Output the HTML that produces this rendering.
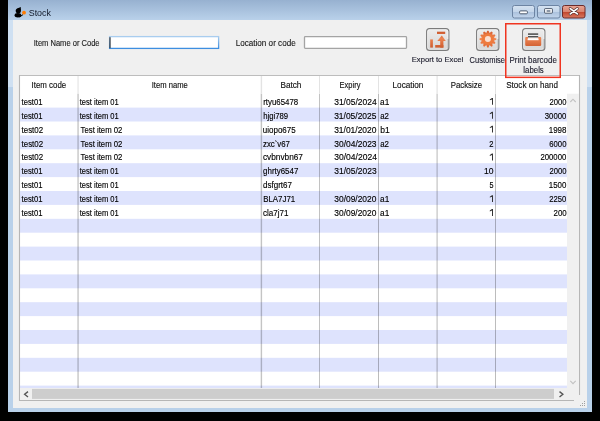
<!DOCTYPE html>
<html><head><meta charset="utf-8"><title>Stock</title>
<style>
html,body{margin:0;padding:0;width:600px;height:421px;overflow:hidden;background:#000;}
svg{display:block;font-family:"Liberation Sans", sans-serif;}
</style></head><body>
<svg width="600" height="421" viewBox="0 0 600 421">
<rect x="0" y="0" width="600" height="421" fill="#000"/>
<rect x="8" y="0" width="584" height="412" fill="#b9d1ea"/>
<rect x="8" y="20" width="5" height="67" fill="#cfe0f2"/>
<rect x="587" y="20" width="5" height="67" fill="#cfe0f2"/>
<defs><linearGradient id="tg" x1="0" y1="0" x2="0" y2="1"><stop offset="0" stop-color="#97b1d0"/><stop offset="1" stop-color="#b9d1ea"/></linearGradient><linearGradient id="btn" x1="0" y1="0" x2="0" y2="1"><stop offset="0" stop-color="#d6e3f1"/><stop offset="0.5" stop-color="#c3d5ea"/><stop offset="0.5" stop-color="#a9c0dc"/><stop offset="1" stop-color="#c4d6ec"/></linearGradient><linearGradient id="cls" x1="0" y1="0" x2="0" y2="1"><stop offset="0" stop-color="#e9a595"/><stop offset="0.5" stop-color="#d98470"/><stop offset="0.5" stop-color="#c0432b"/><stop offset="1" stop-color="#d97a62"/></linearGradient><linearGradient id="ico" x1="0" y1="0" x2="0" y2="1"><stop offset="0" stop-color="#ededed"/><stop offset="1" stop-color="#d6d6d6"/></linearGradient><linearGradient id="inp" x1="0" y1="0" x2="0" y2="1"><stop offset="0" stop-color="#a9cdef"/><stop offset="1" stop-color="#3d8ee0"/></linearGradient></defs>
<rect x="8" y="0" width="584" height="20" fill="url(#tg)"/>
<rect x="13" y="20" width="574" height="388" fill="#f0f0f0"/>
<g fill="#000"><circle cx="18.3" cy="10.8" r="2.6"/><path d="M17.2 8.6 L20.8 6.9 L20.9 11 Z"/><ellipse cx="17.9" cy="15.3" rx="3.3" ry="2.2"/><path d="M19 16.5 L22.8 14.2 L23.2 15 L19.5 17.4 Z"/></g>
<circle cx="24" cy="12.7" r="1.9" fill="#ff7a00"/>
<text id="title" x="28.75" y="15.80" font-size="9.5" fill="#101828" textLength="22.16" lengthAdjust="spacingAndGlyphs">Stock</text>
<rect x="512.5" y="5.5" width="22" height="12.5" rx="2" fill="url(#btn)" stroke="#6d84a3" stroke-width="1"/>
<rect x="519.6" y="10.9" width="7.8" height="2.9" rx="1" fill="#fff" stroke="#3e4c60" stroke-width="0.9"/>
<rect x="537.5" y="5.5" width="22.5" height="12.5" rx="2" fill="url(#btn)" stroke="#6d84a3" stroke-width="1"/>
<rect x="544.6" y="8.6" width="7.8" height="4.6" rx="0.6" fill="#fff" stroke="#3e4c60" stroke-width="0.9"/>
<rect x="546.6" y="10.3" width="3.8" height="1.4" fill="#5a6a80"/>
<rect x="562.5" y="5.5" width="22.5" height="12.5" rx="2" fill="url(#cls)" stroke="#6b2b2b" stroke-width="1"/>
<path d="M570.3 8.6 L577.3 13.9 M577.3 8.6 L570.3 13.9" stroke="#4a2a2a" stroke-width="3.0" stroke-linecap="round"/>
<path d="M570.3 8.6 L577.3 13.9 M577.3 8.6 L570.3 13.9" stroke="#fff" stroke-width="1.8" stroke-linecap="round"/>
<text id="lbl1" x="33.71" y="45.60" font-size="8.2" fill="#1a1a1a" stroke="#1a1a1a" stroke-width="0.12" textLength="65.86" lengthAdjust="spacingAndGlyphs">Item Name or Code</text>
<rect x="109.6" y="36.6" width="109" height="11.8" fill="#fff" stroke="url(#inp)" stroke-width="1.3"/>
<rect x="109.4" y="37.2" width="1.2" height="11" fill="#3a3a3a"/>
<text id="lbl2" x="235.71" y="45.60" font-size="8.2" fill="#1a1a1a" stroke="#1a1a1a" stroke-width="0.12" textLength="59.98" lengthAdjust="spacingAndGlyphs">Location or code</text>
<rect x="304.5" y="36.6" width="102" height="11.8" rx="0.8" fill="#fff" stroke="#a4a4a4" stroke-width="1.3"/>
<rect x="426.6" y="28.6" width="22.3" height="21.8" rx="3" fill="url(#ico)" stroke="#7c7c7c" stroke-width="1.1"/>
<rect x="427.7" y="29.7" width="20.1" height="19.6" rx="2" fill="none" stroke="#fafafa" stroke-width="0.7" opacity="0.8"/>
<rect x="447.6" y="39" width="1.2" height="10.5" fill="#8c8c8c" opacity="0.7"/>
<defs><linearGradient id="og" gradientUnits="userSpaceOnUse" x1="0" y1="31" x2="0" y2="48"><stop offset="0" stop-color="#c9542a"/><stop offset="0.45" stop-color="#ec8452"/><stop offset="1" stop-color="#cc5a2c"/></linearGradient></defs>
<g fill="url(#og)"><rect x="437" y="31.7" width="8.2" height="2.3"/><rect x="430.2" y="39.4" width="2.7" height="8.2"/><rect x="435.2" y="45" width="8.2" height="2.6"/><rect x="440.2" y="40" width="3.2" height="7.6"/><path d="M437.3 40.9 L441.8 35.6 L445.8 40.9 Z"/></g>
<rect x="476.6" y="28.6" width="22.3" height="21.8" rx="3" fill="url(#ico)" stroke="#7c7c7c" stroke-width="1.1"/>
<rect x="477.7" y="29.7" width="20.1" height="19.6" rx="2" fill="none" stroke="#fafafa" stroke-width="0.7" opacity="0.8"/>
<rect x="497.6" y="39" width="1.2" height="10.5" fill="#8c8c8c" opacity="0.7"/>
<defs><linearGradient id="gear" x1="0" y1="0" x2="0" y2="1"><stop offset="0" stop-color="#d4592a"/><stop offset="0.45" stop-color="#f28852"/><stop offset="1" stop-color="#e06630"/></linearGradient></defs>
<polygon points="486.30,33.11 487.28,30.72 488.52,30.72 489.50,33.11 489.50,33.11 491.56,31.54 492.62,32.15 492.28,34.72 492.28,34.72 494.85,34.38 495.46,35.44 493.89,37.50 493.89,37.50 496.28,38.48 496.28,39.72 493.89,40.70 493.89,40.70 495.46,42.76 494.85,43.82 492.28,43.48 492.28,43.48 492.62,46.05 491.56,46.66 489.50,45.09 489.50,45.09 488.52,47.48 487.28,47.48 486.30,45.09 486.30,45.09 484.24,46.66 483.18,46.05 483.52,43.48 483.52,43.48 480.95,43.82 480.34,42.76 481.91,40.70 481.91,40.70 479.52,39.72 479.52,38.48 481.91,37.50 481.91,37.50 480.34,35.44 480.95,34.38 483.52,34.72 483.52,34.72 483.18,32.15 484.24,31.54 486.30,33.11" fill="url(#gear)"/>
<circle cx="487.9" cy="39.1" r="5.8" fill="#ee7b3e"/>
<circle cx="487.9" cy="39.1" r="3" fill="#fbe0d2"/>
<rect x="522.6" y="28.6" width="22.3" height="21.8" rx="3" fill="url(#ico)" stroke="#7c7c7c" stroke-width="1.1"/>
<rect x="523.7" y="29.7" width="20.1" height="19.6" rx="2" fill="none" stroke="#fafafa" stroke-width="0.7" opacity="0.8"/>
<rect x="543.6" y="39" width="1.2" height="10.5" fill="#8c8c8c" opacity="0.7"/>
<rect x="525.2" y="36.9" width="16" height="9" rx="1.2" fill="url(#og)"/>
<rect x="528" y="33.3" width="10.2" height="5.5" fill="#fff"/>
<rect x="528" y="33.3" width="10.2" height="1.6" fill="#505050"/>
<rect x="528" y="35.9" width="10.2" height="1.6" fill="#505050"/>
<rect x="527.6" y="38.6" width="11" height="1.6" fill="#fff"/>
<text id="tb1" x="411.71" y="62.00" font-size="7.0" fill="#1a1a2a" stroke="#1a1a2a" stroke-width="0.12" textLength="51.51" lengthAdjust="spacingAndGlyphs">Export to Excel</text>
<text id="tb2" x="469.55" y="63.00" font-size="8.6" fill="#1a1a2a" stroke="#1a1a2a" stroke-width="0.12" textLength="35.46" lengthAdjust="spacingAndGlyphs">Customise</text>
<text id="tb3" x="509.55" y="62.90" font-size="8.6" fill="#1a1a2a" stroke="#1a1a2a" stroke-width="0.12" textLength="47.34" lengthAdjust="spacingAndGlyphs">Print barcode</text>
<text id="tb4" x="523.36" y="72.80" font-size="8.6" fill="#1a1a2a" stroke="#1a1a2a" stroke-width="0.12" textLength="20.43" lengthAdjust="spacingAndGlyphs">labels</text>
<rect x="20" y="76" width="559" height="324" fill="#fff"/>
<clipPath id="bodyclip"><rect x="20" y="93.7" width="547" height="294.3"/></clipPath>
<g clip-path="url(#bodyclip)">
<rect x="20" y="107.60" width="547" height="13.90" fill="#dee3fd"/>
<rect x="20" y="135.40" width="547" height="13.90" fill="#dee3fd"/>
<rect x="20" y="163.20" width="547" height="13.90" fill="#dee3fd"/>
<rect x="20" y="191.00" width="547" height="13.90" fill="#dee3fd"/>
<rect x="20" y="218.80" width="547" height="13.90" fill="#dee3fd"/>
<rect x="20" y="246.60" width="547" height="13.90" fill="#dee3fd"/>
<rect x="20" y="274.40" width="547" height="13.90" fill="#dee3fd"/>
<rect x="20" y="302.20" width="547" height="13.90" fill="#dee3fd"/>
<rect x="20" y="330.00" width="547" height="13.90" fill="#dee3fd"/>
<rect x="20" y="357.80" width="547" height="13.90" fill="#dee3fd"/>
<rect x="20" y="385.60" width="547" height="13.90" fill="#dee3fd"/>
</g>
<g style="mix-blend-mode:multiply">
<rect x="77.5" y="93.7" width="1.1" height="294.30" fill="#b8b8b8"/>
<rect x="260.7" y="93.7" width="1.4" height="294.30" fill="#c4c4c4"/>
<rect x="319.0" y="93.7" width="1.0" height="294.30" fill="#c2c2c2"/>
<rect x="378.0" y="93.7" width="1.0" height="294.30" fill="#bcbcbc"/>
<rect x="436.5" y="93.7" width="1.2" height="294.30" fill="#c4c4c4"/>
<rect x="495.0" y="93.7" width="1.0" height="294.30" fill="#bcbcbc"/>
</g>
<rect x="77.5" y="76" width="1.1" height="17.70" fill="#e3e3e3"/>
<rect x="260.7" y="76" width="1.4" height="17.70" fill="#e3e3e3"/>
<rect x="319.0" y="76" width="1.0" height="17.70" fill="#e3e3e3"/>
<rect x="378.0" y="76" width="1.0" height="17.70" fill="#e3e3e3"/>
<rect x="436.5" y="76" width="1.2" height="17.70" fill="#e3e3e3"/>
<rect x="495.0" y="76" width="1.0" height="17.70" fill="#e3e3e3"/>
<path d="M574 400.5 L19.5 400.5 L19.5 75.5 L579.5 75.5 L579.5 395" fill="none" stroke="#b6b6b6" stroke-width="1.1"/>
<rect x="20" y="75" width="559" height="1" fill="#bdbdbd"/>
<text id="h1" x="31.56" y="88.00" font-size="9.8" fill="#101010" stroke="#101010" stroke-width="0.15" textLength="34.72" lengthAdjust="spacingAndGlyphs">Item code</text>
<text id="h2" x="151.71" y="88.00" font-size="9.8" fill="#101010" stroke="#101010" stroke-width="0.15" textLength="36.10" lengthAdjust="spacingAndGlyphs">Item name</text>
<text id="h3" x="280.44" y="88.00" font-size="9.8" fill="#101010" stroke="#101010" stroke-width="0.15" textLength="21.01" lengthAdjust="spacingAndGlyphs">Batch</text>
<text id="h4" x="339.59" y="88.00" font-size="9.8" fill="#101010" stroke="#101010" stroke-width="0.15" textLength="20.80" lengthAdjust="spacingAndGlyphs">Expiry</text>
<text id="h5" x="392.56" y="88.00" font-size="9.8" fill="#101010" stroke="#101010" stroke-width="0.15" textLength="30.87" lengthAdjust="spacingAndGlyphs">Location</text>
<text id="h6" x="450.71" y="88.00" font-size="9.8" fill="#101010" stroke="#101010" stroke-width="0.15" textLength="31.34" lengthAdjust="spacingAndGlyphs">Packsize</text>
<text id="h7" x="506.24" y="88.00" font-size="9.8" fill="#101010" stroke="#101010" stroke-width="0.15" textLength="51.64" lengthAdjust="spacingAndGlyphs">Stock on hand</text>
<text id="c0" x="21.53" y="104.80" font-size="9.8" fill="#000" stroke="#000" stroke-width="0.15" textLength="20.93" lengthAdjust="spacingAndGlyphs">test01</text>
<text id="n0" x="79.70" y="104.80" font-size="9.8" fill="#000" stroke="#000" stroke-width="0.15" textLength="39.08" lengthAdjust="spacingAndGlyphs">test item 01</text>
<text id="b0" x="263.24" y="104.80" font-size="9.8" fill="#000" stroke="#000" stroke-width="0.15" textLength="35.00" lengthAdjust="spacingAndGlyphs">rtyu65478</text>
<text id="e0" x="334.20" y="104.80" font-size="9.8" fill="#000" stroke="#000" stroke-width="0.15" textLength="42.45" lengthAdjust="spacingAndGlyphs">31/05/2024</text>
<text id="l0" x="380.12" y="104.80" font-size="9.8" fill="#000" stroke="#000" stroke-width="0.15" textLength="9.19" lengthAdjust="spacingAndGlyphs">a1</text>
<path d="M492.0 97.90 L492.95 97.90 L492.95 104.80 L492.0 104.80 L492.0 99.40 L489.8 100.30 L489.8 99.40 Z" fill="#2a2a2a"/>
<text id="s0" x="549.40" y="104.80" font-size="9.8" fill="#000" stroke="#000" stroke-width="0.15" textLength="17.00" lengthAdjust="spacingAndGlyphs">2000</text>
<text id="c1" x="21.53" y="118.70" font-size="9.8" fill="#000" stroke="#000" stroke-width="0.15" textLength="20.93" lengthAdjust="spacingAndGlyphs">test01</text>
<text id="n1" x="79.70" y="118.70" font-size="9.8" fill="#000" stroke="#000" stroke-width="0.15" textLength="39.08" lengthAdjust="spacingAndGlyphs">test item 01</text>
<text id="b1" x="263.15" y="118.70" font-size="9.8" fill="#000" stroke="#000" stroke-width="0.15" textLength="24.93" lengthAdjust="spacingAndGlyphs">hjgi789</text>
<text id="e1" x="334.15" y="118.70" font-size="9.8" fill="#000" stroke="#000" stroke-width="0.15" textLength="42.30" lengthAdjust="spacingAndGlyphs">31/05/2025</text>
<text id="l1" x="380.15" y="118.70" font-size="9.8" fill="#000" stroke="#000" stroke-width="0.15" textLength="8.76" lengthAdjust="spacingAndGlyphs">a2</text>
<path d="M492.0 111.80 L492.95 111.80 L492.95 118.70 L492.0 118.70 L492.0 113.30 L489.8 114.20 L489.8 113.30 Z" fill="#2a2a2a"/>
<text id="s1" x="544.81" y="118.70" font-size="9.8" fill="#000" stroke="#000" stroke-width="0.15" textLength="21.58" lengthAdjust="spacingAndGlyphs">30000</text>
<text id="c2" x="21.54" y="132.60" font-size="9.8" fill="#000" stroke="#000" stroke-width="0.15" textLength="21.62" lengthAdjust="spacingAndGlyphs">test02</text>
<text id="n2" x="80.58" y="132.60" font-size="9.8" fill="#000" stroke="#000" stroke-width="0.15" textLength="41.79" lengthAdjust="spacingAndGlyphs">Test item 02</text>
<text id="b2" x="262.84" y="132.60" font-size="9.8" fill="#000" stroke="#000" stroke-width="0.15" textLength="32.83" lengthAdjust="spacingAndGlyphs">uiopo675</text>
<text id="e2" x="334.15" y="132.60" font-size="9.8" fill="#000" stroke="#000" stroke-width="0.15" textLength="42.33" lengthAdjust="spacingAndGlyphs">31/01/2020</text>
<text id="l2" x="380.22" y="132.60" font-size="9.8" fill="#000" stroke="#000" stroke-width="0.15" textLength="9.48" lengthAdjust="spacingAndGlyphs">b1</text>
<path d="M492.0 125.70 L492.95 125.70 L492.95 132.60 L492.0 132.60 L492.0 127.20 L489.8 128.10 L489.8 127.20 Z" fill="#2a2a2a"/>
<text id="s2" x="548.72" y="132.60" font-size="9.8" fill="#000" stroke="#000" stroke-width="0.15" textLength="17.75" lengthAdjust="spacingAndGlyphs">1998</text>
<text id="c3" x="21.54" y="146.50" font-size="9.8" fill="#000" stroke="#000" stroke-width="0.15" textLength="21.62" lengthAdjust="spacingAndGlyphs">test02</text>
<text id="n3" x="80.58" y="146.50" font-size="9.8" fill="#000" stroke="#000" stroke-width="0.15" textLength="41.79" lengthAdjust="spacingAndGlyphs">Test item 02</text>
<text id="b3" x="262.98" y="146.50" font-size="9.8" fill="#000" stroke="#000" stroke-width="0.15" textLength="27.02" lengthAdjust="spacingAndGlyphs">zxc`v67</text>
<text id="e3" x="334.30" y="146.50" font-size="9.8" fill="#000" stroke="#000" stroke-width="0.15" textLength="42.27" lengthAdjust="spacingAndGlyphs">30/04/2023</text>
<text id="l3" x="380.15" y="146.50" font-size="9.8" fill="#000" stroke="#000" stroke-width="0.15" textLength="8.76" lengthAdjust="spacingAndGlyphs">a2</text>
<text id="p3" x="489.21" y="146.50" font-size="9.8" fill="#000" stroke="#000" stroke-width="0.15" textLength="4.24" lengthAdjust="spacingAndGlyphs">2</text>
<text id="s3" x="549.26" y="146.50" font-size="9.8" fill="#000" stroke="#000" stroke-width="0.15" textLength="17.17" lengthAdjust="spacingAndGlyphs">6000</text>
<text id="c4" x="21.54" y="160.40" font-size="9.8" fill="#000" stroke="#000" stroke-width="0.15" textLength="21.62" lengthAdjust="spacingAndGlyphs">test02</text>
<text id="n4" x="80.58" y="160.40" font-size="9.8" fill="#000" stroke="#000" stroke-width="0.15" textLength="41.79" lengthAdjust="spacingAndGlyphs">Test item 02</text>
<text id="b4" x="262.92" y="160.40" font-size="9.8" fill="#000" stroke="#000" stroke-width="0.15" textLength="40.05" lengthAdjust="spacingAndGlyphs">cvbnvbn67</text>
<text id="e4" x="334.26" y="160.40" font-size="9.8" fill="#000" stroke="#000" stroke-width="0.15" textLength="42.66" lengthAdjust="spacingAndGlyphs">30/04/2024</text>
<path d="M492.0 153.50 L492.95 153.50 L492.95 160.40 L492.0 160.40 L492.0 155.00 L489.8 155.90 L489.8 155.00 Z" fill="#2a2a2a"/>
<text id="s4" x="540.38" y="160.40" font-size="9.8" fill="#000" stroke="#000" stroke-width="0.15" textLength="25.95" lengthAdjust="spacingAndGlyphs">200000</text>
<text id="c5" x="21.53" y="174.30" font-size="9.8" fill="#000" stroke="#000" stroke-width="0.15" textLength="20.93" lengthAdjust="spacingAndGlyphs">test01</text>
<text id="n5" x="79.70" y="174.30" font-size="9.8" fill="#000" stroke="#000" stroke-width="0.15" textLength="39.08" lengthAdjust="spacingAndGlyphs">test item 01</text>
<text id="b5" x="263.07" y="174.30" font-size="9.8" fill="#000" stroke="#000" stroke-width="0.15" textLength="35.27" lengthAdjust="spacingAndGlyphs">ghrty6547</text>
<text id="e5" x="334.29" y="174.30" font-size="9.8" fill="#000" stroke="#000" stroke-width="0.15" textLength="42.34" lengthAdjust="spacingAndGlyphs">31/05/2023</text>
<text id="p5" x="483.91" y="174.30" font-size="9.8" fill="#000" stroke="#000" stroke-width="0.15" textLength="9.50" lengthAdjust="spacingAndGlyphs">10</text>
<text id="s5" x="549.40" y="174.30" font-size="9.8" fill="#000" stroke="#000" stroke-width="0.15" textLength="17.00" lengthAdjust="spacingAndGlyphs">2000</text>
<text id="c6" x="21.53" y="188.20" font-size="9.8" fill="#000" stroke="#000" stroke-width="0.15" textLength="20.93" lengthAdjust="spacingAndGlyphs">test01</text>
<text id="n6" x="79.70" y="188.20" font-size="9.8" fill="#000" stroke="#000" stroke-width="0.15" textLength="39.08" lengthAdjust="spacingAndGlyphs">test item 01</text>
<text id="b6" x="263.06" y="188.20" font-size="9.8" fill="#000" stroke="#000" stroke-width="0.15" textLength="28.94" lengthAdjust="spacingAndGlyphs">dsfgrt67</text>
<text id="p6" x="489.51" y="188.20" font-size="9.8" fill="#000" stroke="#000" stroke-width="0.15" textLength="4.04" lengthAdjust="spacingAndGlyphs">5</text>
<text id="s6" x="548.75" y="188.20" font-size="9.8" fill="#000" stroke="#000" stroke-width="0.15" textLength="17.59" lengthAdjust="spacingAndGlyphs">1500</text>
<text id="c7" x="21.53" y="202.10" font-size="9.8" fill="#000" stroke="#000" stroke-width="0.15" textLength="20.93" lengthAdjust="spacingAndGlyphs">test01</text>
<text id="n7" x="79.70" y="202.10" font-size="9.8" fill="#000" stroke="#000" stroke-width="0.15" textLength="39.08" lengthAdjust="spacingAndGlyphs">test item 01</text>
<text id="b7" x="263.18" y="202.10" font-size="9.8" fill="#000" stroke="#000" stroke-width="0.15" textLength="32.05" lengthAdjust="spacingAndGlyphs">BLA7J71</text>
<text id="e7" x="334.30" y="202.10" font-size="9.8" fill="#000" stroke="#000" stroke-width="0.15" textLength="42.08" lengthAdjust="spacingAndGlyphs">30/09/2020</text>
<text id="l7" x="380.12" y="202.10" font-size="9.8" fill="#000" stroke="#000" stroke-width="0.15" textLength="9.19" lengthAdjust="spacingAndGlyphs">a1</text>
<path d="M492.0 195.20 L492.95 195.20 L492.95 202.10 L492.0 202.10 L492.0 196.70 L489.8 197.60 L489.8 196.70 Z" fill="#2a2a2a"/>
<text id="s7" x="549.21" y="202.10" font-size="9.8" fill="#000" stroke="#000" stroke-width="0.15" textLength="17.10" lengthAdjust="spacingAndGlyphs">2250</text>
<text id="c8" x="21.53" y="216.00" font-size="9.8" fill="#000" stroke="#000" stroke-width="0.15" textLength="20.93" lengthAdjust="spacingAndGlyphs">test01</text>
<text id="n8" x="79.70" y="216.00" font-size="9.8" fill="#000" stroke="#000" stroke-width="0.15" textLength="39.08" lengthAdjust="spacingAndGlyphs">test item 01</text>
<text id="b8" x="262.95" y="216.00" font-size="9.8" fill="#000" stroke="#000" stroke-width="0.15" textLength="25.57" lengthAdjust="spacingAndGlyphs">cla7j71</text>
<text id="e8" x="334.30" y="216.00" font-size="9.8" fill="#000" stroke="#000" stroke-width="0.15" textLength="42.08" lengthAdjust="spacingAndGlyphs">30/09/2020</text>
<text id="l8" x="380.12" y="216.00" font-size="9.8" fill="#000" stroke="#000" stroke-width="0.15" textLength="9.19" lengthAdjust="spacingAndGlyphs">a1</text>
<path d="M492.0 209.10 L492.95 209.10 L492.95 216.00 L492.0 216.00 L492.0 210.60 L489.8 211.50 L489.8 210.60 Z" fill="#2a2a2a"/>
<text id="s8" x="553.52" y="216.00" font-size="9.8" fill="#000" stroke="#000" stroke-width="0.15" textLength="13.18" lengthAdjust="spacingAndGlyphs">200</text>
<rect x="567" y="93.7" width="12" height="294.3" fill="#f0f0f0"/>
<path d="M570.3 102 L573 99.2 L575.7 102" fill="none" stroke="#c2c2c2" stroke-width="1.1"/>
<path d="M570.3 380.8 L573 383.6 L575.7 380.8" fill="none" stroke="#c2c2c2" stroke-width="1.1"/>
<rect x="20" y="388" width="559" height="12" fill="#f0f0f0"/>
<rect x="32" y="388.9" width="522" height="10" fill="#cdcdcd"/>
<path d="M28 391.6 L24.6 394.3 L28 397" fill="none" stroke="#555" stroke-width="1.35"/>
<path d="M559.5 391.6 L562.9 394.3 L559.5 397" fill="none" stroke="#555" stroke-width="1.35"/>
<rect x="584" y="401" width="1" height="1" fill="#a0a0a0"/>
<rect x="582" y="403" width="1" height="1" fill="#a0a0a0"/>
<rect x="584" y="403" width="1" height="1" fill="#a0a0a0"/>
<rect x="580" y="405" width="1" height="1" fill="#a0a0a0"/>
<rect x="582" y="405" width="1" height="1" fill="#a0a0a0"/>
<rect x="584" y="405" width="1" height="1" fill="#a0a0a0"/>
<rect x="505.75" y="23.75" width="54.5" height="53.6" fill="none" stroke="#f03420" stroke-width="1.5"/>
</svg>
</body></html>
